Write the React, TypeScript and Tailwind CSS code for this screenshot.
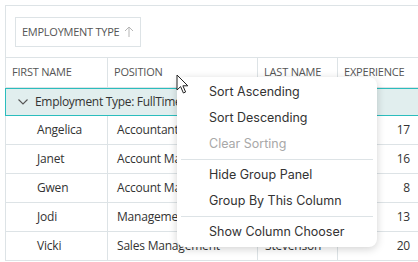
import React from "react";

const rows = [
  { first: "Angelica", position: "Accountant", last: "", exp: 17 },
  { first: "Janet", position: "Account Manager", last: "", exp: 16 },
  { first: "Gwen", position: "Account Manager", last: "", exp: 8 },
  { first: "Jodi", position: "Management", last: "", exp: 13 },
  { first: "Vicki", position: "Sales Management", last: "Stevenson", exp: 20 },
];

const menu = [
  { label: "Sort Ascending" },
  { label: "Sort Descending" },
  { label: "Clear Sorting", disabled: true, sep: true },
  { label: "Hide Group Panel" },
  { label: "Group By This Column", sep: true },
  { label: "Show Column Chooser" },
];

function Cursor() {
  return (
    <svg width="16" height="22" viewBox="0 0 16 22" className="absolute left-[176px] top-[74px]">
      <path d="M1 1 L1 16 L4.6 12.6 L7.4 19 L9.6 18 L6.9 11.8 L11.8 11.8 Z" fill="#fff" stroke="#222" strokeWidth="1" strokeLinejoin="round" />
    </svg>
  );
}

export default function App() {
  return (
    <div className="relative w-[418px] h-[262px] overflow-hidden bg-white text-[#333] font-['Open_Sans','Noto_Sans',sans-serif]">
      <div className="ml-[5px] mt-[5px] w-[420px] border-l border-t border-[#dde3e6]">
        {/* group panel */}
        <div className="h-[52px] pl-[9px] pt-[11px] border-b border-[#dde3e6]">
          <div className="inline-flex items-center h-[30px] px-[6px] border border-[#dde3e6] text-[11px] text-[#555] tracking-[-0.25px]">
            EMPLOYMENT TYPE
            <svg width="10" height="12" viewBox="0 0 10 12" className="ml-[5px]">
              <path d="M5 1 V11 M1 5 L5 1 L9 5" fill="none" stroke="#b5b5b5" strokeWidth="1" />
            </svg>
          </div>
        </div>
        {/* header */}
        <div className="flex h-[30px] text-[11px] text-[#555] tracking-[-0.2px] border-b border-[#dde3e6]">
          <div className="w-[102px] pl-[6px] flex items-center border-r border-[#dde3e6]">FIRST NAME</div>
          <div className="w-[150px] pl-[6px] flex items-center border-r border-[#dde3e6]">POSITION</div>
          <div className="w-[80px] pl-[6px] flex items-center border-r border-[#dde3e6]">LAST NAME</div>
          <div className="flex-1 pl-[6px] flex items-center">EXPERIENCE</div>
        </div>
        {/* group row */}
        <div className="flex items-center h-[28px] -ml-px bg-[#e1eeee] border border-[#2bbdbd] text-[12px] tracking-[-0.3px] whitespace-nowrap">
          <svg width="12" height="8" viewBox="0 0 12 8" className="ml-[11px] mr-[6px]">
            <path d="M1.5 1.5 L6 6 L10.5 1.5" fill="none" stroke="#555" strokeWidth="1.1" />
          </svg>
          Employment Type: FullTime
        </div>
        {rows.map((r) => (
          <div key={r.first} className="flex h-[29px] text-[12px] tracking-[-0.2px] border-b border-[#dde3e6]">
            <div className="w-[102px] pl-[31px] flex items-center border-r border-[#dde3e6]">{r.first}</div>
            <div className="w-[150px] pl-[9px] flex items-center border-r border-[#dde3e6] whitespace-nowrap overflow-hidden">{r.position}</div>
            <div className="w-[80px] pl-[7px] flex items-center border-r border-[#dde3e6]">{r.last}</div>
            <div className="w-[80px] pr-[8px] flex items-center justify-end">{r.exp}</div>
          </div>
        ))}
      </div>

      {/* context menu */}
      <div className="absolute left-[177px] top-[77px] w-[200px] py-[2px] bg-white rounded-[8px] shadow-[0_2px_8px_rgba(0,0,0,0.18)] font-['Inter',sans-serif] text-[12.5px]">
        {menu.map((m) => (
          <div key={m.label}>
            <div className={"h-[26px] flex items-center pl-[32px] " + (m.disabled ? "text-[#a8a8a8]" : "text-[#333]")}>
              {m.label}
            </div>
            {m.sep && <div className="mx-[4px] my-[2px] h-px bg-[#dde3e6]" />}
          </div>
        ))}
      </div>
      <Cursor />
    </div>
  );
}
